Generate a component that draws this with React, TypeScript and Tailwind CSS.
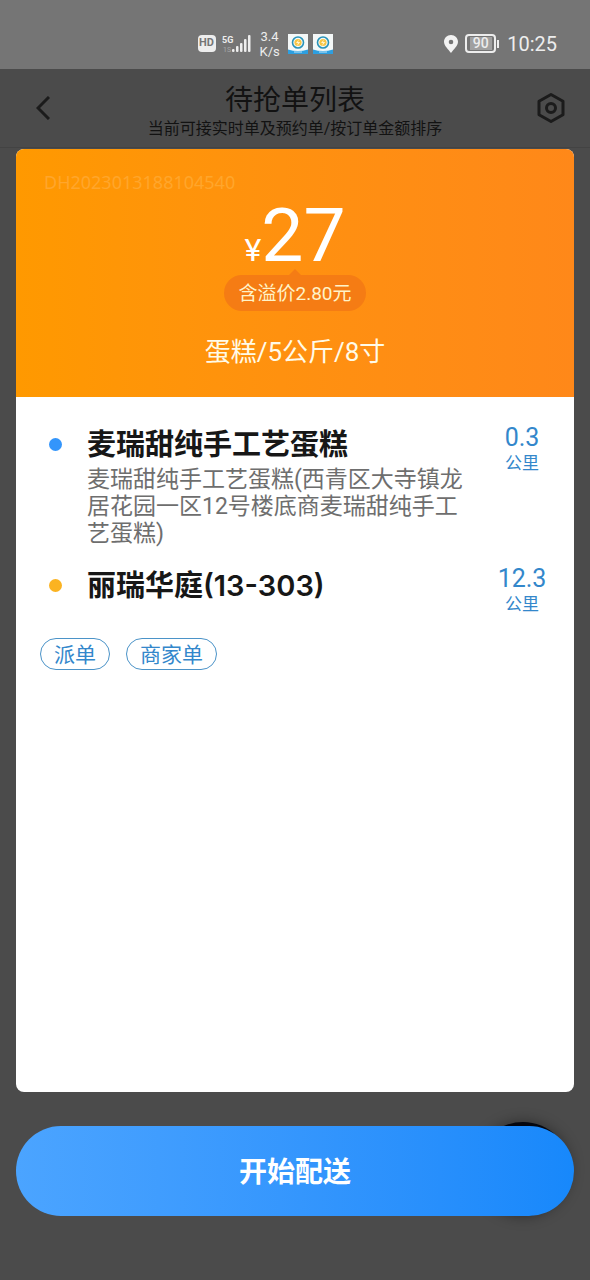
import React from "react";
import clsx from "clsx";

interface Stop {
  name: string;
  address?: string;
  distance: string;
  dot: string;
}

const stops: Stop[] = [
  {
    name: "麦瑞甜纯手工艺蛋糕",
    address: "麦瑞甜纯手工艺蛋糕(西青区大寺镇龙居花园一区12号楼底商麦瑞甜纯手工艺蛋糕)",
    distance: "0.3",
    dot: "bg-[#3395fb]",
  },
  {
    name: "丽瑞华庭(13-303)",
    distance: "12.3",
    dot: "bg-[#fbb321]",
  },
];

const tags = ["派单", "商家单"];

const SignalIcon = () => (
  <svg width="30" height="20" viewBox="0 0 30 20" fill="#ededed" aria-hidden="true">
    <text x="0" y="9" fontSize="9" fontWeight="700">5G</text>
    <text x="1" y="18" fontSize="7" opacity="0.4">1S</text>
    <rect x="10" y="15" width="2.500" height="3" rx="1" />
    <rect x="14" y="12" width="2.500" height="6" rx="1" />
    <rect x="18" y="9" width="2.500" height="9" rx="1" />
    <rect x="22" y="5" width="2.500" height="13" rx="1" />
    <rect x="26" y="1" width="2.500" height="17" rx="1" />
  </svg>
);

const AppBadge = () => (
  <svg width="20" height="20" viewBox="0 0 20 20" aria-hidden="true">
    <rect width="20" height="20" fill="#f4f8f8" />
    <path d="M0 15.5Q10 18.5 20 15.5V20H0Z" fill="#2d9fe0" />
    <circle cx="10" cy="8.5" r="5.5" fill="none" stroke="#2893b8" strokeWidth="1.6" />
    <circle cx="10" cy="8.5" r="3.6" fill="#f7c544" />
    <path d="M11 5.5 8 9h2l-1 3 3.2-4H10Z" fill="#fff6d0" />
    <path d="M6 18h8" stroke="#c5e6f8" strokeWidth="1" />
  </svg>
);

const PinIcon = () => (
  <svg width="14" height="18" viewBox="0 0 14 18" aria-hidden="true">
    <path
      fillRule="evenodd"
      d="M7 0C3 0 0 3 0 6.8 0 11 4.5 14.5 7 18 9.5 14.5 14 11 14 6.8 14 3 11 0 7 0Zm0 4.700a2.300 2.300 0 1 1 0 4.600 2.300 2.300 0 0 1 0-4.600Z"
      fill="#f2f2f2"
    />
  </svg>
);

const StatusBar = () => (
  <div className="grid h-[69px] grid-cols-[1fr_auto_1fr] items-center bg-[#757575] pt-[18px] text-[#ededed]">
    <div />
    <div className="flex items-center pr-15">
      <span className="mr-[6px] flex h-[17px] w-[18px] items-center justify-center rounded bg-[#ededed] text-[11px] font-bold text-[#757575]">
        HD
      </span>
      <SignalIcon />
      <span className="ml-2 mr-2 w-5 text-center text-[13px] leading-[15px]">
        3.4
        <br />
        K/s
      </span>
      <span className="flex gap-[5px]">
        <AppBadge />
        <AppBadge />
      </span>
    </div>
    <div className="flex items-center justify-end pr-[33px]">
      <PinIcon />
      <span className="ml-[7px] flex h-[19px] w-[31px] items-center justify-center rounded border-2 border-[#ededed]">
        <span className="flex h-[13px] w-[22px] items-center justify-center bg-[#a0a0a0] text-[14px] font-medium">
          90
        </span>
      </span>
      <span className="ml-px h-2 w-[2px] bg-[#ededed]" />
      <span className="ml-2 text-[20px]">10:25</span>
    </div>
  </div>
);

const Header = () => (
  <header className="flex h-[79px] items-center justify-between border-b border-[#434343] px-6 text-[#121212]">
    <button type="button" aria-label="返回" className="flex w-10 justify-start pl-3">
      <svg width="14" height="24" viewBox="0 0 14 24" fill="none" stroke="#1b1b1b" strokeWidth="3">
        <path d="M13 1 2 12l11 11" />
      </svg>
    </button>
    <div className="flex flex-col items-center pt-2">
      <h1 className="text-[28px] leading-[34px]">待抢单列表</h1>
      <p className="text-[16px] leading-[22px]">当前可接实时单及预约单/按订单金额排序</p>
    </div>
    <button type="button" aria-label="设置" className="flex w-10 justify-end">
      <svg width="30" height="32" viewBox="0 0 30 32" fill="none" stroke="#1b1b1b" strokeWidth="3">
        <path d="M15 2.5 27 9.2v13.6L15 29.5 3 22.8V9.2Z" strokeLinejoin="round" />
        <circle cx="15" cy="16" r="4.5" />
      </svg>
    </button>
  </header>
);

const Price = () => (
  <div className="flex h-[248px] flex-col bg-linear-to-r from-[#ff9900] to-[#ff8819] px-7 pt-5 text-white">
    <p className="font-['Noto_Sans'] text-[18px] leading-[26px] text-[#ffa62c]">DH2023013188104540</p>
    <div className="flex h-[74px] items-baseline justify-center">
      <span className="text-[32px]">¥</span>
      <span className="text-[75px] leading-[80px]">27</span>
    </div>
    <div className="flex flex-col items-center text-[#fff3c8]">
      <svg width="12" height="6" viewBox="0 0 12 6" aria-hidden="true">
        <path d="M6 0 12 6H0Z" fill="#f57c14" />
      </svg>
      <span className="h-9 rounded-full bg-[#f57c14] px-[14px] text-[19px] leading-[38px]">含溢价2.80元</span>
    </div>
    <p className="pt-6 text-center text-[26px] leading-[34px] text-[#fffbe8]">蛋糕/5公斤/8寸</p>
  </div>
);

const StopRow = ({ name, address, distance, dot }: Stop) => (
  <li className="flex items-start">
    <span className={clsx("mt-[14px] size-[13px] shrink-0 rounded-full", dot)} />
    <div className="ml-[25px] min-w-0 flex-1">
      <h2 className="font-[Inter,'Noto_Sans_CJK_SC',sans-serif] text-[29px] font-semibold leading-[42px] text-[#171717]">
        {name}
      </h2>
      {address && <p className="text-[23px] leading-[27px] text-[#6e6e6e]">{address}</p>}
    </div>
    <div className="ml-5 w-[72px] text-center text-[#3387cb]">
      <div className="text-[25px] leading-7">{distance}</div>
      <div className="text-[17px] leading-[22px]">公里</div>
    </div>
  </li>
);

const App: React.FC = () => {
  return (
    <main className="relative flex min-h-screen flex-col bg-[#4b4b4b] font-[Roboto,'Noto_Sans_CJK_SC',sans-serif]">
      <StatusBar />
      <Header />

      <section className="mx-4 mt-px flex flex-1 flex-col overflow-hidden rounded-lg bg-white">
        <Price />
        <ul className="flex flex-col gap-[18px] pb-[23px] pl-[33px] pr-4 pt-[27px]">
          {stops.map((stop) => (
            <StopRow key={stop.name} {...stop} />
          ))}
        </ul>
        <div className="flex gap-4 px-6">
          {tags.map((tag) => (
            <span
              key={tag}
              className="h-8 rounded-full border border-[#4b93c8] px-[13px] text-[21px] leading-[32px] text-[#3387cb]"
            >
              {tag}
            </span>
          ))}
        </div>
      </section>

      <div className="relative mx-4 mb-16 mt-[34px]">
        {/* floating button of the page below, dimmed by the mask */}
        <span className="absolute -top-1 right-1 size-[94px] rounded-full bg-[#05070f] shadow-[0_0_14px_rgba(0,0,0,0.4)]" />
        <button
          type="button"
          className="relative h-[90px] w-full rounded-full bg-linear-to-r from-[#4ba4ff] to-[#1788fb] pt-1 text-[28px] font-bold text-white"
        >
          开始配送
        </button>
      </div>
    </main>
  );
};

export default App;
